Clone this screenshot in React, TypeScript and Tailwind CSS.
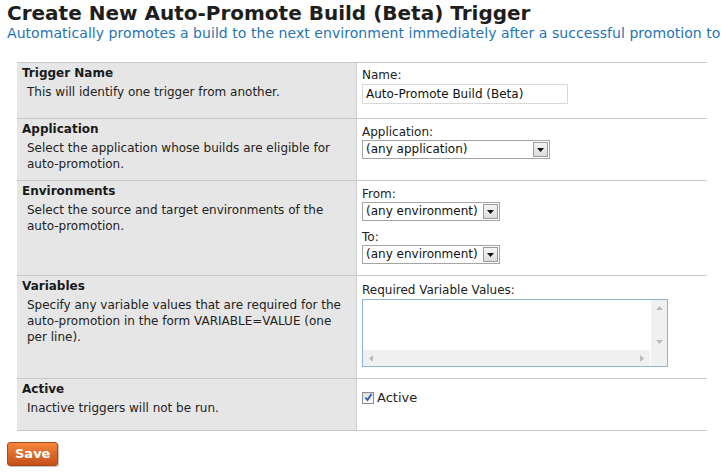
import React from "react";

const font = { fontFamily: '"DejaVu Sans", Verdana, sans-serif' };

function Select({ text, w }: { text: string; w: string }) {
  return (
    <div className={`flex h-[19px] items-stretch border border-[#a5a5a5] bg-white ${w}`}>
      <span className="flex-1 pl-[3px] text-[12px] leading-[17px] text-[#111]">{text}</span>
      <span className="m-[1px] flex w-[15px] items-center justify-center border border-[#9a9a9a] bg-gradient-to-b from-[#f4f4f4] to-[#dcdcdc]">
        <svg width="7" height="4" viewBox="0 0 7 4"><path d="M0 0h7L3.5 4z" fill="#111" /></svg>
      </span>
    </div>
  );
}

function Row({ title, desc, children, h }: { title: string; desc: React.ReactNode; children: React.ReactNode; h: string }) {
  return (
    <div className={`flex border-b border-[#c8c8c8] ${h}`}>
      <div className="w-[340px] border-r border-[#d0d0d0] bg-[#e6e6e6] pl-[5px] pt-[2px]">
        <div className="text-[12px] font-bold leading-[16px] text-[#1a1a1a]">{title}</div>
        <div className="pl-[5px] pr-[8px] pt-[3px] text-[12px] leading-[16px] text-[#222]">{desc}</div>
      </div>
      <div className="flex-1 pl-[5px] pt-[5px] text-[12px] leading-[15px] text-[#222]">{children}</div>
    </div>
  );
}

export default function App() {
  return (
    <div className="h-[474px] w-[722px] overflow-hidden bg-white" style={font}>
      <div className="pl-[7px] pt-[2px]">
        <h1 className="whitespace-nowrap text-[20px] font-bold leading-[23px] text-[#1e1e1e]">
          Create New Auto-Promote Build (Beta) Trigger
        </h1>
        <div className="whitespace-nowrap text-[14px] tracking-[0.05px] leading-[17px] text-[#1f74b3]">
          Automatically promotes a build to the next environment immediately after a successful promotion to
        </div>
      </div>
      <div className="ml-[17px] mt-[20px] w-[690px] border-t border-[#c8c8c8]">
        <Row h="h-[56px]" title="Trigger Name" desc="This will identify one trigger from another.">
          <div>Name:</div>
          <div className="mt-[1px] h-[20px] w-[206px] border border-[#d8d8d8] pl-[3px] text-[12px] leading-[18px] text-[#111]">
            Auto-Promote Build (Beta)
          </div>
        </Row>
        <Row h="h-[62px]" title="Application" desc="Select the application whose builds are eligible for auto-promotion.">
          <div className="mt-[1px]">Application:</div>
          <Select text="(any application)" w="w-[188px]" />
        </Row>
        <Row h="h-[95px]" title="Environments" desc="Select the source and target environments of the auto-promotion.">
          <div className="mt-[1px]">From:</div>
          <Select text="(any environment)" w="w-[138px]" />
          <div className="mt-[9px]">To:</div>
          <Select text="(any environment)" w="w-[138px]" />
        </Row>
        <Row h="h-[103px]" title="Variables" desc="Specify any variable values that are required for the auto-promotion in the form VARIABLE=VALUE (one per line).">
          <div className="mt-[2px]">Required Variable Values:</div>
          <div className="mt-[1px] flex h-[68px] w-[306px] flex-col border border-[#8eb4d6] bg-white">
            <div className="flex flex-1">
              <div className="flex-1" />
              <div className="flex w-[16px] flex-col items-center justify-between bg-[#f0f0f0] py-[6px]">
                <svg width="7" height="4" viewBox="0 0 7 4"><path d="M3.5 0L7 4H0z" fill="#bbb" /></svg>
                <svg width="7" height="4" viewBox="0 0 7 4"><path d="M0 0h7L3.5 4z" fill="#bbb" /></svg>
              </div>
            </div>
            <div className="flex h-[16px]">
              <div className="flex flex-1 items-center justify-between border-r border-white bg-[#f0f0f0] px-[6px]">
                <svg width="4" height="7" viewBox="0 0 4 7"><path d="M0 3.5L4 0v7z" fill="#bbb" /></svg>
                <svg width="4" height="7" viewBox="0 0 4 7"><path d="M4 3.5L0 0v7z" fill="#bbb" /></svg>
              </div>
              <div className="w-[16px] bg-[#f0f0f0]" />
            </div>
          </div>
        </Row>
        <Row h="h-[52px]" title="Active" desc="Inactive triggers will not be run.">
          <div className="mt-[6px] flex items-center gap-[3px] text-[13px]">
            <span className="flex h-[12px] w-[12px] items-center justify-center border border-[#8c8c8c] bg-gradient-to-b from-[#e0e0e0] to-[#fafafa]">
              <svg width="9" height="9" viewBox="0 0 9 9"><path d="M1.5 4.5L3.5 7L7.5 1" stroke="#3358a8" strokeWidth="1.8" fill="none" /></svg>
            </span>
            <span className="text-[#222]">Active</span>
          </div>
        </Row>
      </div>
      <div className="pl-[7px] pt-[10px]">
        <button className="h-[24px] rounded-[3px] border border-[#a8471a] bg-gradient-to-b from-[#f5863a] to-[#c4511b] px-[7px] text-[13px] font-bold leading-[20px] text-white shadow-[1px_1px_1px_rgba(0,0,0,0.25)]">
          Save
        </button>
      </div>
    </div>
  );
}
